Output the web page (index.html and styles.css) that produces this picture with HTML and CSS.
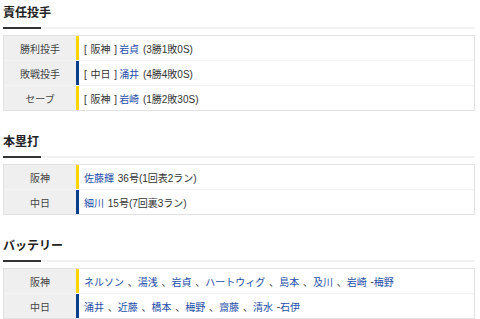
FILE: index.html
```html
<!DOCTYPE html>
<html lang="ja">
<head>
<meta charset="utf-8">
<link rel="stylesheet" href="styles.css">
</head>
<body>
<div class="page">
  <section class="sec">
    <h2 class="ttl">責任投手</h2>
    <div class="tbl">
      <div class="row"><div class="lbl">勝利投手</div><div class="val tigers"><span class="team">[ 阪神 ]</span> <a>岩貞</a> (3勝1敗0S)</div></div>
      <div class="row"><div class="lbl">敗戦投手</div><div class="val dragons"><span class="team">[ 中日 ]</span> <a>涌井</a> (4勝4敗0S)</div></div>
      <div class="row"><div class="lbl">セーブ</div><div class="val tigers"><span class="team">[ 阪神 ]</span> <a>岩崎</a> (1勝2敗30S)</div></div>
    </div>
  </section>
  <section class="sec">
    <h2 class="ttl">本塁打</h2>
    <div class="tbl">
      <div class="row"><div class="lbl">阪神</div><div class="val tigers"><a>佐藤輝</a> 36号(1回表2ラン)</div></div>
      <div class="row"><div class="lbl">中日</div><div class="val dragons"><a>細川</a> 15号(7回裏3ラン)</div></div>
    </div>
  </section>
  <section class="sec">
    <h2 class="ttl">バッテリー</h2>
    <div class="tbl">
      <div class="row"><div class="lbl">阪神</div><div class="val tigers list"><a>ネルソン</a> 、<a>湯浅</a> 、<a>岩貞</a> 、<a>ハートウィグ</a> 、<a>島本</a> 、<a>及川</a> 、<a>岩崎</a> -<a>梅野</a></div></div>
      <div class="row"><div class="lbl">中日</div><div class="val dragons list"><a>涌井</a> 、<a>近藤</a> 、<a>橋本</a> 、<a>梅野</a> 、<a>齋藤</a> 、<a>清水</a> -<a>石伊</a></div></div>
    </div>
  </section>
</div>
</body>
</html>
```

FILE: styles.css
```css
* { box-sizing: border-box; margin: 0; padding: 0; }
body {
  background: #fff;
  font-family: "Liberation Sans", "Noto Sans CJK JP", sans-serif;
  color: #333;
}
.page {
  width: 472px;
  margin-left: 3px;
}
.sec { margin-bottom: 18px; }
.sec:last-child { margin-bottom: 0; }
.ttl {
  font-family: "Noto Sans CJK JP", sans-serif;
  font-size: 12px;
  font-weight: bold;
  line-height: 20px;
  color: #222;
  position: relative;
  padding-top: 2px;
  padding-bottom: 5px;
  border-bottom: 2px solid #f2f2f2;
  margin-bottom: 6px;
}
.ttl::after {
  content: "";
  position: absolute;
  left: 0;
  bottom: -2px;
  width: 38px;
  height: 2px;
  background: #333;
}
.tbl {
  border: 1px solid #e2e2e2;
}
.row {
  display: flex;
  height: 25px;
  border-top: 1px solid #f4f4f4;
}
.row:first-child { border-top: 0; height: 24px; }
.lbl {
  width: 72px;
  background: #efefef;
  font-family: "Noto Sans CJK JP", sans-serif;
  font-size: 10px;
  color: #444;
  display: flex;
  align-items: center;
  justify-content: center;
}
.val {
  flex: 1;
  border-left: 3px solid #fdd600;
  padding-left: 5px;
  font-size: 10px;
  color: #333;
  display: flex;
  align-items: center;
  white-space: pre;
  word-spacing: 1px;
}
.val.list { word-spacing: 1px; }
.val.dragons { border-left-color: #0b3f8c; }
.team { margin-right: 2px; }
.val a { color: #1d4ea8; }
```
